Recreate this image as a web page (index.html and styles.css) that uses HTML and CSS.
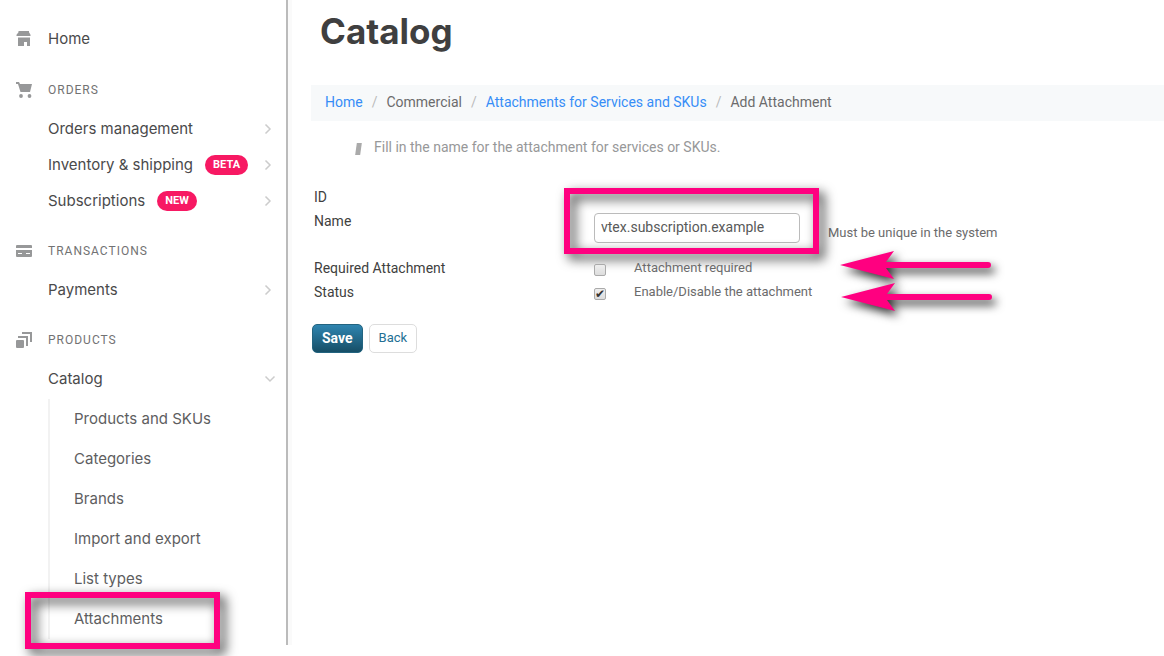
FILE: index.html
```html
<!DOCTYPE html>
<html lang="en">
<head>
<meta charset="utf-8">
<meta name="viewport" content="width=device-width, initial-scale=1">
<title>Catalog</title>
<link rel="stylesheet" href="styles.css">
</head>
<body>
<div class="app">
  <nav class="sidebar" aria-label="Main">
    <a class="home" href="#">
      <svg class="icon" viewBox="0 0 16 16"><path d="M2.500 0h10.500v1.200l1.500 2.500V5H.5V3.700L2.500 1.200zM2 6.500h12V15h-3v-4H8v4H2z"/></svg>
      <span>Home</span>
    </a>

    <h2 class="heading">
      <svg class="icon" viewBox="0 0 16 16"><path d="M0 0h3l1 2h12l-2 8H4.500L2 2H0z"/><circle cx="5" cy="14" r="1.900"/><circle cx="13.500" cy="14" r="1.900"/></svg>
      <span>ORDERS</span>
    </h2>
    <ul class="menu">
      <li><a class="row" href="#"><span>Orders management</span><svg class="chevron" viewBox="0 0 8 12"><path d="M1.500 1.500 6 6l-4.500 4.500"/></svg></a></li>
      <li><a class="row" href="#"><span>Inventory &amp; shipping</span><span class="badge">BETA</span><svg class="chevron" viewBox="0 0 8 12"><path d="M1.500 1.500 6 6l-4.500 4.500"/></svg></a></li>
      <li><a class="row" href="#"><span>Subscriptions</span><span class="badge">NEW</span><svg class="chevron" viewBox="0 0 8 12"><path d="M1.500 1.500 6 6l-4.500 4.500"/></svg></a></li>
    </ul>

    <h2 class="heading">
      <svg class="icon" viewBox="0 0 16 16"><path fill-rule="evenodd" d="M1 2h14q1 0 1 1v2H0V3q0-1 1-1zM0 7h16v6q0 1-1 1H1q-1 0-1-1zM2 10v1h4v-1zM10 10v1h4v-1z"/></svg>
      <span>TRANSACTIONS</span>
    </h2>
    <ul class="menu">
      <li><a class="row" href="#"><span>Payments</span><svg class="chevron" viewBox="0 0 8 12"><path d="M1.500 1.500 6 6l-4.500 4.500"/></svg></a></li>
    </ul>

    <h2 class="heading">
      <svg class="icon" viewBox="0 0 16 16"><path d="M1 8h6q1 0 1 1v6q0 1-1 1H1q-1 0-1-1V9q0-1 1-1zM2 4h10v10h-2V6H2zM6 0h10v10h-2V2H6z"/></svg>
      <span>PRODUCTS</span>
    </h2>
    <ul class="menu">
      <li>
        <a class="row" href="#"><span>Catalog</span><svg class="chevron chevron-open" viewBox="0 0 12 8"><path d="M1.500 1.500 6 6l4.500-4.500"/></svg></a>
        <ul class="submenu">
          <li><a href="#">Products and SKUs</a></li>
          <li><a href="#">Categories</a></li>
          <li><a href="#">Brands</a></li>
          <li><a href="#">Import and export</a></li>
          <li><a href="#">List types</a></li>
          <li class="marked"><a href="#">Attachments</a><span class="highlight highlight-menu"></span></li>
        </ul>
      </li>
    </ul>
  </nav>

  <main class="content">
    <h1 class="title">Catalog</h1>
    <ol class="breadcrumb">
      <li><a href="#">Home</a></li>
      <li>Commercial</li>
      <li><a href="#">Attachments for Services and SKUs</a></li>
      <li>Add Attachment</li>
    </ol>
    <p class="tip">Fill in the name for the attachment for services or SKUs.</p>

    <form class="form">
      <div class="field">
        <span class="label">ID</span>
      </div>
      <div class="field field-name">
        <label class="label" for="name">Name</label>
        <div class="control">
          <span class="marked"><input class="text" id="name" type="text" value="vtex.subscription.example"><span class="highlight highlight-input"></span></span>
          <span class="hint">Must be unique in the system</span>
        </div>
      </div>
      <div class="field">
        <span class="label">Required Attachment</span>
        <div class="control control-check marked">
          <input class="check" id="required" type="checkbox">
          <label class="option" for="required">Attachment required</label>
          <svg class="arrow" viewBox="0 0 180 60"><path d="M6 23 60 9 52 20H154a3 3 0 0 1 0 6H52L60 37z"/></svg>
        </div>
      </div>
      <div class="field">
        <span class="label">Status</span>
        <div class="control control-check marked">
          <input class="check" id="status" type="checkbox" checked>
          <label class="option" for="status">Enable/Disable the attachment</label>
          <svg class="arrow arrow-status" viewBox="0 0 180 60"><path d="M6 23 60 9 52 20H154a3 3 0 0 1 0 6H52L60 37z"/></svg>
        </div>
      </div>
      <div class="actions">
        <button class="button primary" type="submit">Save</button>
        <button class="button" type="button">Back</button>
      </div>
    </form>
  </main>
</div>
</body>
</html>
```
FILE: styles.css
```css
* { box-sizing: border-box; }

body {
  margin: 0;
  background: #fff;
  color: #3f3f40;
  font-family: Roboto, "Liberation Sans", sans-serif;
  font-size: 14px;
  line-height: 20px;
}

ul, ol { margin: 0; padding: 0; list-style: none; }
a { color: inherit; text-decoration: none; }

.app { display: flex; align-items: flex-start; min-height: 100vh; }

/* Sidebar */
.sidebar {
  flex: none;
  width: 292px;
  padding: 21px 0 6px;
  border-right: 4px solid #fafafa;
  box-shadow: inset -2px 0 #bbb;
  color: #4a4a4b;
  font-family: Inter, "Liberation Sans", sans-serif;
  font-size: 15px;
}

.home, .heading { display: flex; align-items: center; gap: 16px; padding-left: 16px; }
.home { height: 36px; margin-bottom: 12px; }
.heading {
  height: 42px;
  margin: 0;
  color: #727273;
  font-family: Roboto, "Liberation Sans", sans-serif;
  font-size: 12px;
  font-weight: 400;
  letter-spacing: 1px;
}
.menu + .heading { margin-top: 11px; }
.icon { width: 16px; height: 16px; fill: #979899; }

.row {
  display: flex;
  align-items: center;
  height: 36px;
  padding: 0 16px 0 48px;
}
.badge {
  margin-left: 12px;
  padding: 0 8px;
  border-radius: 10px;
  background: #f71963;
  color: #fff;
  font-family: Roboto, "Liberation Sans", sans-serif;
  font-size: 11px;
  font-weight: 700;
}
.chevron {
  width: 8px;
  height: 12px;
  margin-left: auto;
  fill: none;
  stroke: #ccc;
  stroke-width: 1.5;
}
.chevron-open { width: 12px; height: 8px; margin-right: -4px; }

.submenu {
  margin: 2px 0 0 48px;
  border-left: 2px solid #f2f2f2;
  color: #5e5e5f;
}
.submenu a { display: block; padding: 10px 24px; }

/* Callouts drawn over the page */
.marked { position: relative; }
.highlight {
  position: absolute;
  border: 6px solid #ff0080;
  filter: drop-shadow(5px 5px 6px rgba(0, 0, 0, .8));
  pointer-events: none;
}
.highlight-menu { top: -7px; left: -25px; width: 195px; height: 57px; }
.highlight-input { top: -23px; left: -30px; width: 255px; height: 66px; }
.arrow {
  position: absolute;
  top: -16px;
  left: 240px;
  width: 180px;
  height: 60px;
  overflow: visible;
  fill: #ff0080;
  filter: drop-shadow(4px 5px 5px rgba(0, 0, 0, .8));
  pointer-events: none;
}
.arrow-status { top: -8px; left: 241px; }

/* Content */
.content { flex: 1; min-width: 0; padding: 7px 0 0 19px; }
.title {
  margin: 0 0 30px 9px;
  font-family: Inter, "Liberation Sans", sans-serif;
  font-size: 35px;
  line-height: 48px;
}
.breadcrumb {
  display: flex;
  height: 36px;
  padding: 7px 14px;
  background: #f7f9fa;
  color: #6b6b6c;
}
.breadcrumb li + li::before { content: "/"; padding: 0 9px; color: #bbb; }
.breadcrumb a { color: #368df7; }
.tip {
  display: flex;
  align-items: center;
  gap: 13px;
  margin: 16px 0 0 45px;
  color: #979899;
}
.tip::before { content: ""; width: 5px; height: 12px; margin-top: 4px; background: #aaa; transform: skewX(-8deg); }

.form { margin-top: 30px; }
.field {
  display: grid;
  grid-template-columns: 280px 1fr;
  min-height: 24px;
  padding-left: 3px;
}
.field-name { min-height: 47px; }
.label { line-height: 20px; }
.control { display: flex; align-items: flex-start; color: #6b6b6c; font-size: 13px; }
.control-check { gap: 28px; }
.text {
  width: 206px;
  height: 30px;
  margin-top: 2px;
  padding: 0 6px 2px;
  border: 1px solid #bbb;
  border-radius: 4px;
  color: #585959;
  font: inherit;
  font-size: 14px;
}
.hint { margin: 12px 0 0 28px; }
.check {
  display: grid;
  place-items: center;
  width: 12px;
  height: 12px;
  margin: 6px 0 0;
  border: 1px solid #aaa;
  border-radius: 2px;
  background: linear-gradient(#eee, #ddd);
  appearance: none;
}
.check:checked::before { content: "✔"; color: #333; font: 12px/10px "DejaVu Sans", sans-serif; }

.actions { display: flex; gap: 6px; margin-top: 18px; padding-left: 1px; }
.button {
  height: 29px;
  padding: 0 9px 2px;
  border: 1px solid #ddd;
  border-radius: 5px;
  background: #fff;
  color: #236f94;
  font: inherit;
  font-size: 13px;
}
.primary {
  border-color: #236480;
  background: linear-gradient(#2f85b0, #164e66);
  color: #fff;
  font-size: 14px;
  font-weight: 700;
}
```
